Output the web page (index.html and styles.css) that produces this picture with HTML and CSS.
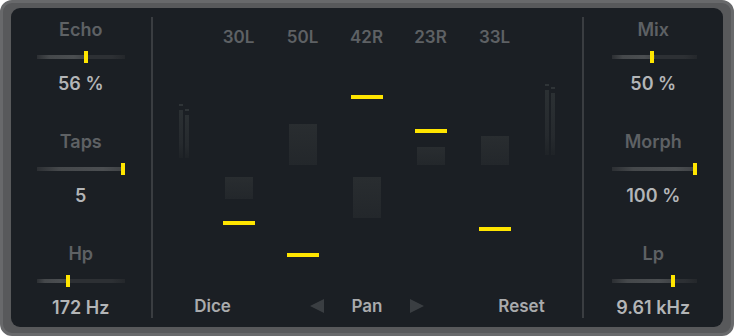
FILE: index.html
```html
<!DOCTYPE html>
<html lang="en">
<head>
    <meta charset="UTF-8">
    <title>Echo Taps</title>
    <link rel="stylesheet" href="styles.css">
</head>
<body>
    <div class="frame">
        <div class="panel">
            <div class="side">
                <div class="param">
                    <div class="param-label">Echo</div>
                    <div class="slider">
                        <div class="slider-fill" style="width:56%"></div>
                        <div class="slider-travel"><div class="slider-thumb" style="left:56%"></div></div>
                    </div>
                    <div class="param-value">56 %</div>
                </div>
                <div class="param">
                    <div class="param-label">Taps</div>
                    <div class="slider">
                        <div class="slider-fill" style="width:100%"></div>
                        <div class="slider-travel"><div class="slider-thumb" style="left:100%"></div></div>
                    </div>
                    <div class="param-value">5</div>
                </div>
                <div class="param">
                    <div class="param-label">Hp</div>
                    <div class="slider">
                        <div class="slider-fill" style="width:35%"></div>
                        <div class="slider-travel"><div class="slider-thumb" style="left:35%"></div></div>
                    </div>
                    <div class="param-value">172 Hz</div>
                </div>
            </div>

            <div class="divider"></div>

            <div class="center">
                <div class="lane-labels">
                    <span>30L</span>
                    <span>50L</span>
                    <span>42R</span>
                    <span>23R</span>
                    <span>33L</span>
                </div>

                <div class="plot">
                    <div class="meter-area meter-left">
                        <div class="meter">
                            <div class="meter-ch"><div class="meter-cap"></div><div class="meter-bar" style="height:48px"></div></div>
                            <div class="meter-ch"><div class="meter-cap"></div><div class="meter-bar" style="height:43px"></div></div>
                        </div>
                    </div>
                    <div class="lanes">
                        <div class="lane">
                            <div class="lane-box" style="top:117px;height:22px"></div>
                            <div class="lane-bar" style="top:161px"></div>
                        </div>
                        <div class="lane">
                            <div class="lane-box" style="top:64px;height:41px"></div>
                            <div class="lane-bar" style="top:193px"></div>
                        </div>
                        <div class="lane">
                            <div class="lane-box" style="top:117px;height:41px"></div>
                            <div class="lane-bar" style="top:35px"></div>
                        </div>
                        <div class="lane">
                            <div class="lane-box" style="top:87px;height:18px"></div>
                            <div class="lane-bar" style="top:69px"></div>
                        </div>
                        <div class="lane">
                            <div class="lane-box" style="top:76px;height:29px"></div>
                            <div class="lane-bar" style="top:167px"></div>
                        </div>
                    </div>
                    <div class="meter-area meter-right">
                        <div class="meter">
                            <div class="meter-ch"><div class="meter-cap"></div><div class="meter-bar" style="height:65px"></div></div>
                            <div class="meter-ch"><div class="meter-cap"></div><div class="meter-bar" style="height:62px"></div></div>
                        </div>
                    </div>
                </div>

                <div class="controls">
                    <div class="ctl">Dice</div>
                    <div class="pan">
                        <span class="tri tri-left"></span>
                        <span class="ctl">Pan</span>
                        <span class="tri tri-right"></span>
                    </div>
                    <div class="ctl">Reset</div>
                </div>
            </div>

            <div class="divider"></div>

            <div class="side side-right">
                <div class="param">
                    <div class="param-label">Mix</div>
                    <div class="slider">
                        <div class="slider-fill" style="width:50%"></div>
                        <div class="slider-travel"><div class="slider-thumb" style="left:46%"></div></div>
                    </div>
                    <div class="param-value">50 %</div>
                </div>
                <div class="param">
                    <div class="param-label">Morph</div>
                    <div class="slider">
                        <div class="slider-fill" style="width:100%"></div>
                        <div class="slider-travel"><div class="slider-thumb" style="left:100%"></div></div>
                    </div>
                    <div class="param-value">100 %</div>
                </div>
                <div class="param">
                    <div class="param-label">Lp</div>
                    <div class="slider">
                        <div class="slider-fill" style="width:73%"></div>
                        <div class="slider-travel"><div class="slider-thumb" style="left:73%"></div></div>
                    </div>
                    <div class="param-value">9.61 kHz</div>
                </div>
            </div>
        </div>
    </div>
</body>
</html>
```

FILE: styles.css
```css
body {
    margin: 0;
    background-color: #ffffff;
    font-family: "Inter", "Liberation Sans", sans-serif;
}

.frame {
    width: 734px;
    height: 336px;
    box-sizing: border-box;
    background-color: #58595b;
    border: 3px solid #68696b;
    border-radius: 12px;
    padding: 5px 8px 6px 8px;
}

.panel {
    height: 100%;
    background-color: #1b1f24;
    border-radius: 9px;
    display: flex;
}

/* side columns with the three sliders */
.side {
    width: 140px;
    padding-top: 12px;
    display: flex;
    flex-direction: column;
    align-items: center;
    gap: 38px;
}

.side-right .slider {
    width: 85px;
    margin-left: 3px;
}

.param {
    display: flex;
    flex-direction: column;
    align-items: center;
}

.param-label,
.param-value {
    height: 20px;
    line-height: 20px;
    font-size: 18px;
    font-weight: 600;
}

.param-label {
    color: #5e6164;
}

.param-value {
    color: #b3b5b7;
}

.slider {
    position: relative;
    width: 88px;
    height: 4px;
    margin: 15px 0;
    background: linear-gradient(to right, #24272b, #2d3034 15%, #2d3034 85%, #24272b);
}

.slider-fill {
    position: absolute;
    left: 0;
    top: 0;
    bottom: 0;
    background: linear-gradient(to right, #2c2f33, #45484b 25%, #4b4e51 75%, #3e4144);
}

.slider-travel {
    position: absolute;
    left: 0;
    right: 4px;
    top: -4px;
    bottom: -4px;
}

.slider-thumb {
    position: absolute;
    top: 0;
    width: 4px;
    height: 12px;
    background-color: #ffe500;
}

.divider {
    width: 2px;
    margin: 9px 0;
    background-color: #3a3d41;
}

/* middle section */
.center {
    flex: 1;
    display: flex;
    flex-direction: column;
    padding-top: 19px;
}

.lane-labels {
    display: flex;
    padding-left: 54px;
}

.lane-labels span {
    width: 64px;
    text-align: center;
    height: 20px;
    line-height: 20px;
    font-size: 17px;
    font-weight: 600;
    color: #5e6164;
}

.plot {
    display: flex;
    height: 220px;
    margin-top: 13px;
}

.meter-area {
    width: 54px;
}

.meter-right {
    width: 55px;
}

.meter {
    display: flex;
    gap: 2px;
    align-items: flex-end;
}

.meter-left .meter {
    margin-left: 26px;
    height: 98px;
}

.meter-right .meter {
    margin-left: 18px;
    height: 95px;
}

.meter-ch {
    width: 4px;
    display: flex;
    flex-direction: column;
    gap: 4px;
}

.meter-cap {
    height: 2px;
    background-color: #2f3437;
}

.meter-bar {
    background: linear-gradient(#2b3033, #262a2e 70%, #1f2327);
}

.lanes {
    display: flex;
}

.lane {
    position: relative;
    width: 64px;
}

.lane-box {
    position: absolute;
    left: 18px;
    width: 28px;
    background: linear-gradient(#292d30, #23272b);
}

.lane-bar {
    position: absolute;
    left: 16px;
    width: 32px;
    height: 4px;
    background-color: #ffe500;
}

.controls {
    display: flex;
    justify-content: space-between;
    align-items: center;
    margin-top: 16px;
}

.controls > .ctl {
    width: 120px;
    text-align: center;
}

.ctl {
    height: 20px;
    line-height: 20px;
    font-size: 17px;
    font-weight: 600;
    color: #a9abad;
}

.pan {
    width: 115px;
    display: flex;
    justify-content: space-between;
    align-items: center;
}

.tri {
    width: 0;
    height: 0;
    border-top: 7.5px solid transparent;
    border-bottom: 7.5px solid transparent;
}

.tri-left {
    border-right: 14px solid #3a3e42;
}

.tri-right {
    border-left: 14px solid #3a3e42;
}
```
